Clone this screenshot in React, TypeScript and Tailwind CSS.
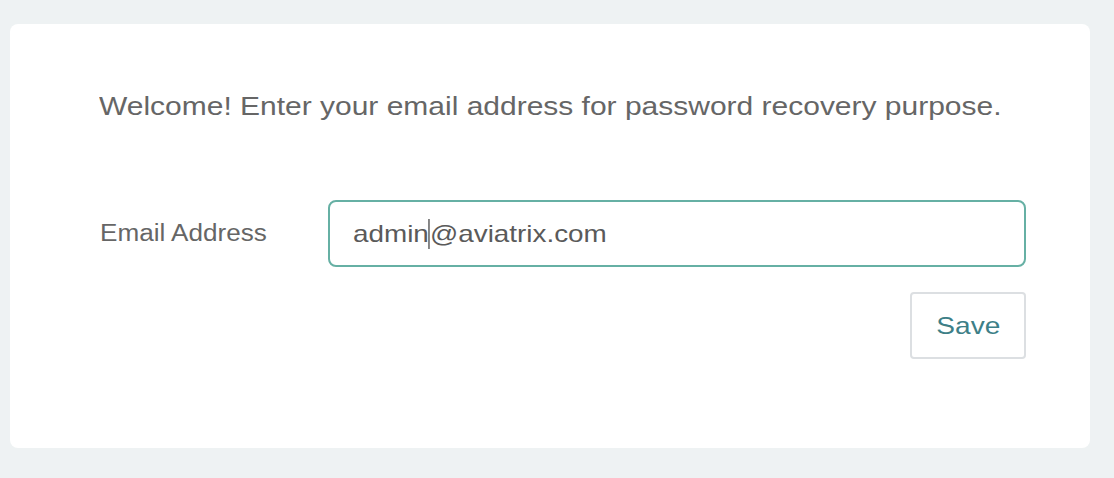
export default function App() {
  return (
    <div className="w-[1114px] h-[478px] bg-[#eef2f3] pt-[24px] pl-[10px]" style={{ fontFamily: '"Liberation Sans", Arial, sans-serif' }}>
      <div className="w-[1080px] h-[424px] bg-white rounded-[8px] pl-[89px] pt-[62px]">
        <p className="text-[26px] leading-[40px] text-[#666666] whitespace-nowrap">
          <span className="inline-block origin-left scale-x-[1.153]">Welcome! Enter your email address for password recovery purpose.</span>
        </p>
        <div className="flex items-center mt-[74px]">
          <div className="w-[229px] text-[23px] text-[#666666] pl-px">
            <span className="inline-block origin-left scale-x-[1.135]">Email Address</span>
          </div>
          <div className="w-[698px] h-[67px] border-2 border-[#66b0a4] rounded-[8px] flex items-center pl-[23px] text-[24px] text-[#5a5a5a] whitespace-nowrap">
            <span className="inline-flex items-center origin-left scale-x-[1.16]">
              <span>admin</span>
              <span className="inline-block w-px h-[30px] bg-[#333]" />
              <span>@aviatrix.com</span>
            </span>
          </div>
        </div>
        <div className="flex justify-end w-[927px] mt-[25px]">
          <button className="w-[116px] h-[67px] border-2 border-[#dcdfe2] rounded-[4px] text-[24px] text-[#3d7f87] bg-white">
            <span className="inline-block scale-x-[1.17]">Save</span>
          </button>
        </div>
      </div>
    </div>
  );
}
